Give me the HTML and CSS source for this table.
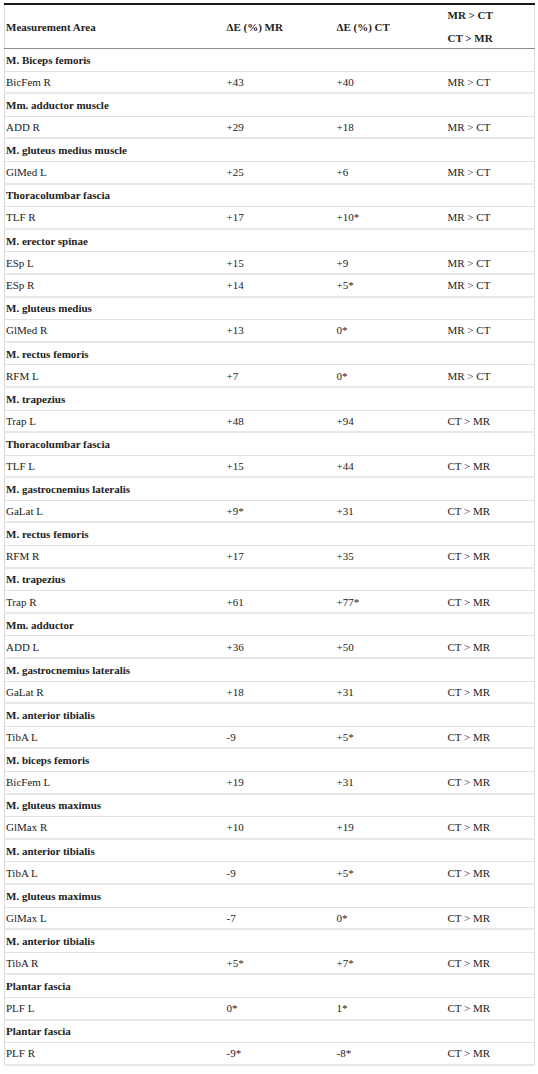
FILE: index.html
```html
<!DOCTYPE html>
<html>
<head>
<meta charset="utf-8">
<link rel="stylesheet" href="styles.css">
</head>
<body>
<table class="data">
  <colgroup>
    <col class="c1"><col class="c2"><col class="c3"><col class="c4">
  </colgroup>
  <thead>
    <tr class="head">
      <th>Measurement Area</th>
      <th>ΔE (%) MR</th>
      <th>ΔE (%) CT</th>
      <th><div class="stack"><span>MR &gt; CT</span><span>CT &gt; MR</span></div></th>
    </tr>
  </thead>
  <tbody>
    <tr class="sec"><td colspan="4">M. Biceps femoris</td></tr>
    <tr class="row"><td>BicFem R</td><td>+43</td><td>+40</td><td>MR &gt; CT</td></tr>
    <tr class="sec"><td colspan="4">Mm. adductor muscle</td></tr>
    <tr class="row"><td>ADD R</td><td>+29</td><td>+18</td><td>MR &gt; CT</td></tr>
    <tr class="sec"><td colspan="4">M. gluteus medius muscle</td></tr>
    <tr class="row"><td>GlMed L</td><td>+25</td><td>+6</td><td>MR &gt; CT</td></tr>
    <tr class="sec"><td colspan="4">Thoracolumbar fascia</td></tr>
    <tr class="row"><td>TLF R</td><td>+17</td><td>+10*</td><td>MR &gt; CT</td></tr>
    <tr class="sec"><td colspan="4">M. erector spinae</td></tr>
    <tr class="row"><td>ESp L</td><td>+15</td><td>+9</td><td>MR &gt; CT</td></tr>
    <tr class="row"><td>ESp R</td><td>+14</td><td>+5*</td><td>MR &gt; CT</td></tr>
    <tr class="sec"><td colspan="4">M. gluteus medius</td></tr>
    <tr class="row"><td>GlMed R</td><td>+13</td><td>0*</td><td>MR &gt; CT</td></tr>
    <tr class="sec"><td colspan="4">M. rectus femoris</td></tr>
    <tr class="row"><td>RFM L</td><td>+7</td><td>0*</td><td>MR &gt; CT</td></tr>
    <tr class="sec"><td colspan="4">M. trapezius</td></tr>
    <tr class="row"><td>Trap L</td><td>+48</td><td>+94</td><td>CT &gt; MR</td></tr>
    <tr class="sec"><td colspan="4">Thoracolumbar fascia</td></tr>
    <tr class="row"><td>TLF L</td><td>+15</td><td>+44</td><td>CT &gt; MR</td></tr>
    <tr class="sec"><td colspan="4">M. gastrocnemius lateralis</td></tr>
    <tr class="row"><td>GaLat L</td><td>+9*</td><td>+31</td><td>CT &gt; MR</td></tr>
    <tr class="sec"><td colspan="4">M. rectus femoris</td></tr>
    <tr class="row"><td>RFM R</td><td>+17</td><td>+35</td><td>CT &gt; MR</td></tr>
    <tr class="sec"><td colspan="4">M. trapezius</td></tr>
    <tr class="row"><td>Trap R</td><td>+61</td><td>+77*</td><td>CT &gt; MR</td></tr>
    <tr class="sec"><td colspan="4">Mm. adductor</td></tr>
    <tr class="row"><td>ADD L</td><td>+36</td><td>+50</td><td>CT &gt; MR</td></tr>
    <tr class="sec"><td colspan="4">M. gastrocnemius lateralis</td></tr>
    <tr class="row"><td>GaLat R</td><td>+18</td><td>+31</td><td>CT &gt; MR</td></tr>
    <tr class="sec"><td colspan="4">M. anterior tibialis</td></tr>
    <tr class="row"><td>TibA L</td><td>-9</td><td>+5*</td><td>CT &gt; MR</td></tr>
    <tr class="sec"><td colspan="4">M. biceps femoris</td></tr>
    <tr class="row"><td>BicFem L</td><td>+19</td><td>+31</td><td>CT &gt; MR</td></tr>
    <tr class="sec"><td colspan="4">M. gluteus maximus</td></tr>
    <tr class="row"><td>GlMax R</td><td>+10</td><td>+19</td><td>CT &gt; MR</td></tr>
    <tr class="sec"><td colspan="4">M. anterior tibialis</td></tr>
    <tr class="row"><td>TibA L</td><td>-9</td><td>+5*</td><td>CT &gt; MR</td></tr>
    <tr class="sec"><td colspan="4">M. gluteus maximus</td></tr>
    <tr class="row"><td>GlMax L</td><td>-7</td><td>0*</td><td>CT &gt; MR</td></tr>
    <tr class="sec"><td colspan="4">M. anterior tibialis</td></tr>
    <tr class="row"><td>TibA R</td><td>+5*</td><td>+7*</td><td>CT &gt; MR</td></tr>
    <tr class="sec"><td colspan="4">Plantar fascia</td></tr>
    <tr class="row"><td>PLF L</td><td>0*</td><td>1*</td><td>CT &gt; MR</td></tr>
    <tr class="sec"><td colspan="4">Plantar fascia</td></tr>
    <tr class="row"><td>PLF R</td><td>-9*</td><td>-8*</td><td>CT &gt; MR</td></tr>
  </tbody>
</table>
</body>
</html>
```

FILE: styles.css
```css
html, body {
  margin: 0;
  padding: 0;
  background: #ffffff;
}
body {
  padding: 3px 4px 0 4px;
  font-family: "Liberation Serif", "Times New Roman", serif;
  font-size: 11px;
  color: #222222;
}
.data {
  width: 530px;
  border-collapse: collapse;
  table-layout: fixed;
  border-top: 2px solid #1a1a1a;
  border-left: 1px solid #dcdcdc;
  border-right: 1px solid #dcdcdc;
  border-bottom: 2px solid #e4e4ea;
}
.c1 { width: 221px; }
.c2 { width: 110px; }
.c3 { width: 111px; }
.c4 { width: 88px; }
.data th, .data td {
  padding: 0 4px 0 1px;
  text-align: left;
  vertical-align: middle;
  white-space: nowrap;
}
.data th {
  font-weight: bold;
  height: 43px;
  border-bottom: 1px solid #8c8c8c;
}
.stack {
  display: flex;
  flex-direction: column;
  gap: 11px;
}
.sec td {
  height: 21.6px;
  font-weight: bold;
  border-bottom: 1px solid #e2e2e2;
}
.row td {
  height: 20.6px;
  border-bottom: 2px solid #e6e6ec;
}
```
